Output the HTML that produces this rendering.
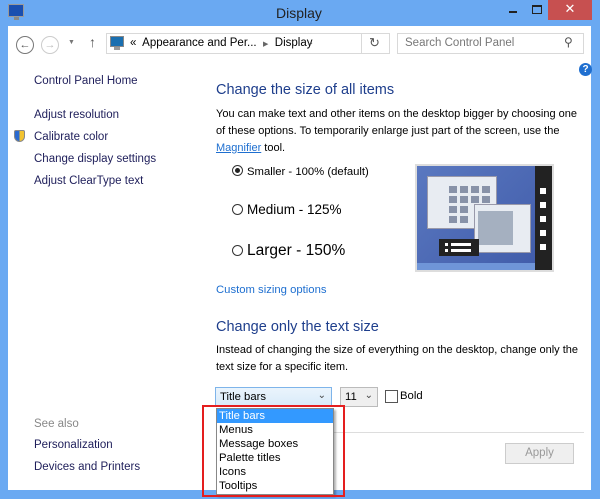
<!DOCTYPE html>
<html><head><style>
*{margin:0;padding:0;box-sizing:border-box}
body{width:600px;height:499px;background:#6aa9f2;font-family:"Liberation Sans",sans-serif;position:relative;overflow:hidden}
.a{position:absolute;white-space:nowrap}
.w{background:#fff}
.nav{color:#1e1e5a;font-size:11.5px}
.h{color:#1e3e8c;font-size:14.5px}
.t{font-size:11px;color:#000}
.radio{display:inline-block;width:11px;height:11px;border:1px solid #333;border-radius:50%;vertical-align:-1px;margin-right:4px;position:relative}
</style></head><body>
<div class="a" style="left:8px;top:4px;width:16px;height:13px;background:#1a4fb0;border:1px solid #999"></div>
<div class="a" style="left:14px;top:17px;width:5px;height:3px;background:#888"></div>
<div class="a" style="left:276px;top:5px;font-size:14px;color:#222">Display</div>
<div class="a" style="left:509px;top:11px;width:8px;height:2px;background:#222"></div>
<div class="a" style="left:532px;top:5px;width:10px;height:9px;border:1px solid #222;border-top-width:2px"></div>
<div class="a" style="left:548px;top:0;width:44px;height:20px;background:#c75050;color:#fff;font-size:13px;text-align:center;line-height:18px">✕</div>
<div class="a w" style="left:8px;top:26px;width:583px;height:464px"></div>
<div class="a" style="left:16px;top:36px;width:18px;height:18px;border:1px solid #777;border-radius:50%;font-size:11px;text-align:center;line-height:16px;color:#555">←</div>
<div class="a" style="left:41px;top:36px;width:18px;height:18px;border:1px solid #ccc;border-radius:50%;font-size:11px;text-align:center;line-height:16px;color:#bbb">→</div>
<div class="a" style="left:68px;top:39px;font-size:7px;color:#777">▼</div>
<div class="a" style="left:89px;top:34px;font-size:14px;color:#555">↑</div>
<div class="a" style="left:106px;top:33px;width:284px;height:21px;border:1px solid #d9d9d9"></div>
<div class="a" style="left:110px;top:36px;width:14px;height:11px;background:#1a6fb0;border:1px solid #888"></div>
<div class="a" style="left:114px;top:47px;width:6px;height:3px;background:#999"></div>
<div class="a" style="left:130px;top:37px;font-size:11.5px;color:#000">«&nbsp; Appearance and Per... &nbsp;<span style="font-size:7px;color:#666">▶</span>&nbsp; Display</div>
<div class="a" style="left:306px;top:37px;font-size:10px;color:#555">⌄</div>
<div class="a" style="left:361px;top:34px;width:1px;height:19px;background:#d9d9d9"></div>
<div class="a" style="left:369px;top:35px;font-size:13px;color:#555">↻</div>
<div class="a" style="left:397px;top:33px;width:187px;height:21px;border:1px solid #d9d9d9"></div>
<div class="a" style="left:405px;top:37px;font-size:11.5px;color:#777">Search Control Panel</div>
<div class="a" style="left:564px;top:35px;font-size:12px;color:#555">⚲</div>
<div class="a" style="left:579px;top:63px;width:13px;height:13px;border-radius:50%;background:#1f6fd0;color:#fff;font-size:10px;font-weight:bold;text-align:center;line-height:13px">?</div>
<div class="a nav" style="left:34px;top:75px">Control Panel Home</div>
<div class="a nav" style="left:34px;top:109px">Adjust resolution</div>
<div class="a" style="left:14px;top:130px;width:11px;height:12px;background:linear-gradient(90deg,#2a6ad0 50%,#f2c330 50%);border-radius:2px 2px 6px 6px;border:1px solid #888"></div>
<div class="a nav" style="left:34px;top:131px">Calibrate color</div>
<div class="a nav" style="left:34px;top:153px">Change display settings</div>
<div class="a nav" style="left:34px;top:175px">Adjust ClearType text</div>
<div class="a nav" style="left:34px;top:418px;color:#888">See also</div>
<div class="a nav" style="left:34px;top:439px">Personalization</div>
<div class="a nav" style="left:34px;top:461px">Devices and Printers</div>
<div class="a h" style="left:216px;top:82px">Change the size of all items</div>
<div class="a t" style="left:216px;top:106px;line-height:17px">You can make text and other items on the desktop bigger by choosing one<br>of these options. To temporarily enlarge just part of the screen, use the<br><span style="color:#1e6fd0;text-decoration:underline">Magnifier</span> tool.</div>
<div class="a" style="left:232px;top:165px;font-size:11.3px"><span class="radio"><span style="position:absolute;left:2px;top:2px;width:5px;height:5px;border-radius:50%;background:#222"></span></span>Smaller - 100% (default)</div>
<div class="a" style="left:232px;top:202px;font-size:13.5px"><span class="radio"></span>Medium - 125%</div>
<div class="a" style="left:232px;top:242px;font-size:15.5px"><span class="radio"></span>Larger - 150%</div>
<div class="a" style="left:415px;top:164px;width:139px;height:108px;border:2px solid #ddd;background:linear-gradient(135deg,#5a78c0,#3f5aa8)"></div>
<div class="a" style="left:535px;top:166px;width:17px;height:104px;background:#222"></div>
<div class="a" style="left:540px;top:188px;width:6px;height:6px;background:#fff;box-shadow:0 14px #fff,0 28px #fff,0 42px #fff,0 56px #fff"></div>
<div class="a" style="left:417px;top:263px;width:118px;height:7px;background:#6f95d8"></div>
<div class="a" style="left:427px;top:176px;width:70px;height:53px;background:#e8ecf2;border:1px solid #99a"></div>
<div class="a" style="left:449px;top:186px;width:8px;height:7px;background:#8892a8;box-shadow:11px 0 #8892a8,22px 0 #8892a8,33px 0 #8892a8,0 10px #8892a8,11px 10px #8892a8,22px 10px #8892a8,33px 10px #8892a8,0 20px #8892a8,11px 20px #8892a8,0 30px #8892a8,11px 30px #8892a8"></div>
<div class="a" style="left:474px;top:204px;width:57px;height:49px;background:#e8ecf2;border:1px solid #99a"></div>
<div class="a" style="left:478px;top:211px;width:35px;height:34px;background:#a5b0c0"></div>
<div class="a" style="left:439px;top:239px;width:40px;height:17px;background:#222"></div>
<div class="a" style="left:445px;top:243px;width:3px;height:3px;background:#fff;box-shadow:0 6px #fff"></div>
<div class="a" style="left:451px;top:243px;width:20px;height:3px;background:#fff;box-shadow:0 6px #fff"></div>
<div class="a" style="left:216px;top:284px;font-size:11.3px;color:#1e6fd0">Custom sizing options</div>
<div class="a h" style="left:216px;top:319px">Change only the text size</div>
<div class="a t" style="left:216px;top:342px;line-height:17px">Instead of changing the size of everything on the desktop, change only the<br>text size for a specific item.</div>
<div class="a" style="left:215px;top:387px;width:117px;height:20px;border:1px solid #7eb4ea;background:linear-gradient(#eaf4fc,#d9ebfa);font-size:11.3px;padding:3px 4px">Title bars<span style="position:absolute;right:5px;top:2px;font-size:10px;color:#444">⌄</span></div>
<div class="a" style="left:340px;top:387px;width:38px;height:20px;border:1px solid #bbb;background:#efefef;font-size:11.3px;padding:3px 4px">11<span style="position:absolute;right:4px;top:2px;font-size:10px;color:#444">⌄</span></div>
<div class="a" style="left:385px;top:390px;width:13px;height:13px;border:1px solid #555;background:#fff"></div>
<div class="a" style="left:400px;top:390px;font-size:11.3px">Bold</div>
<div class="a" style="left:333px;top:432px;width:251px;height:1px;background:#ddd"></div>
<div class="a" style="left:505px;top:443px;width:69px;height:21px;border:1px solid #ccc;background:#efefef;color:#999;font-size:11.5px;text-align:center;line-height:19px">Apply</div>
<div class="a" style="left:216px;top:408px;width:118px;height:87px;background:#fff;border:1px solid #888;box-shadow:2px 2px 2px rgba(0,0,0,.3);font-size:11.3px;line-height:14px">
<div style="background:#3399ff;color:#fff;padding-left:2px">Title bars</div>
<div style="padding-left:2px">Menus</div>
<div style="padding-left:2px">Message boxes</div>
<div style="padding-left:2px">Palette titles</div>
<div style="padding-left:2px">Icons</div>
<div style="padding-left:2px">Tooltips</div>
</div>
<div class="a" style="left:202px;top:405px;width:143px;height:92px;border:2px solid #e41e1e"></div>
</body></html>
